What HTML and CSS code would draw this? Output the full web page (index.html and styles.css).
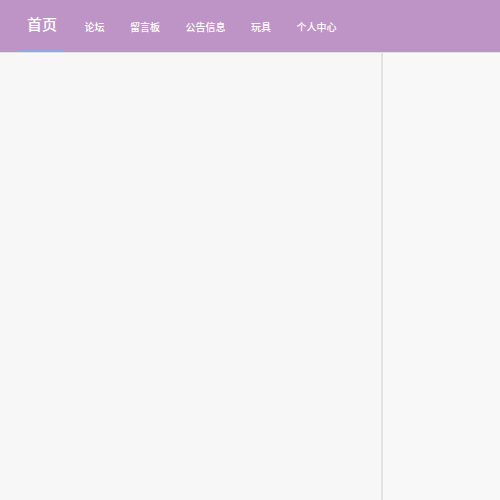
FILE: index.html
```html
<!DOCTYPE html>
<html lang="zh">
<head>
<meta charset="utf-8">
<title>首页</title>
<link rel="stylesheet" href="styles.css">
</head>
<body>
<header class="topbar">
  <nav class="nav">
    <a class="tab active">首页</a>
    <a class="tab">论坛</a>
    <a class="tab">留言板</a>
    <a class="tab">公告信息</a>
    <a class="tab">玩具</a>
    <a class="tab">个人中心</a>
  </nav>
</header>
<main class="content">
  <section class="main-panel"></section>
  <aside class="side-panel"></aside>
</main>
</body>
</html>
```
FILE: styles.css
```css
html, body {
  margin: 0;
  padding: 0;
  height: 100%;
}
body {
  background: #f7f7f7;
  font-family: "Noto Sans CJK SC", "Noto Sans", sans-serif;
  display: flex;
  flex-direction: column;
}
.topbar {
  height: 52px;
  background: #be94c6;
  border-bottom: 1px solid #e2e2e2;
  flex: none;
}
.nav {
  display: flex;
  align-items: stretch;
  height: 100%;
  padding-left: 20px;
  gap: 25.5px;
}
.tab {
  color: #fff;
  font-size: 10px;
  font-weight: 500;
  display: flex;
  align-items: center;
  padding-top: 1px;
  box-sizing: border-box;
  cursor: pointer;
}
.tab.active {
  font-size: 15px;
  padding: 0 7px 3px;
  border-bottom: 2px solid #8fa8e6;
  margin-right: -5px;
}
.content {
  flex: 1;
  display: flex;
}
.main-panel {
  width: 381px;
  border-right: 2px solid #e3e3e3;
  background: #f7f7f7;
}
.side-panel {
  flex: 1;
  background: #f8f8f8;
}
```
